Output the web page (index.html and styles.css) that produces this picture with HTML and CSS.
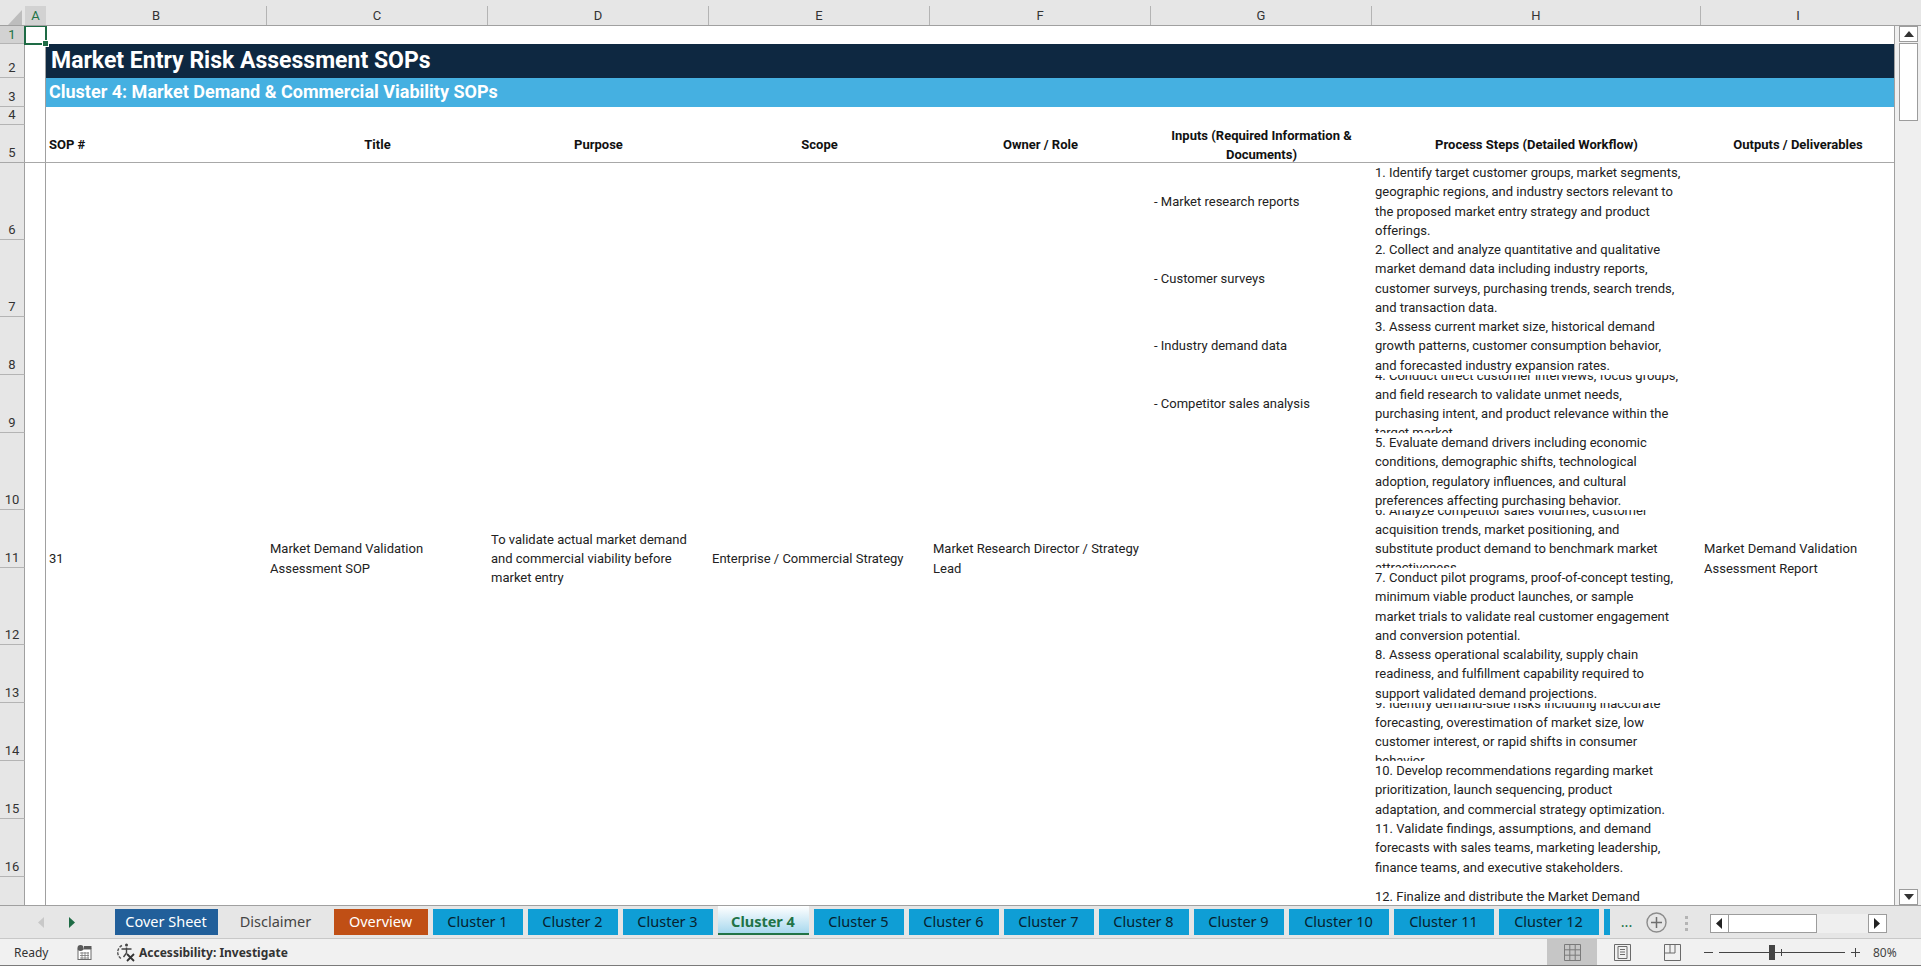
FILE: index.html
```html
<!DOCTYPE html>
<html>
<head>
  <title>Market Entry Risk Assessment SOPs</title>
  <link rel="stylesheet" href="styles.css">
</head>
<body>
<div class="app">

  <div class="col-bar">
    <div class="corner"><svg width="14" height="15" viewBox="0 0 14 15"><path d="M14 0V15H0Z" fill="#bdbdbd"/></svg></div>
    <div class="col-head col-sel">A</div>
    <div class="col-head">B</div>
    <div class="col-head">C</div>
    <div class="col-head">D</div>
    <div class="col-head">E</div>
    <div class="col-head">F</div>
    <div class="col-head">G</div>
    <div class="col-head">H</div>
    <div class="col-head last">I</div>
    <div class="col-rest"></div>
  </div>

  <div class="middle">
    <div class="sheet">
      <div class="col-a-line"></div>
      <div class="head-line"></div>

      <div class="row-head sel r1">1</div>
      <div class="row-head r2">2</div>
      <div class="row-head r3">3</div>
      <div class="row-head r4">4</div>
      <div class="row-head r5">5</div>
      <div class="row-head r6">6</div>
      <div class="row-head r7">7</div>
      <div class="row-head r8">8</div>
      <div class="row-head r9">9</div>
      <div class="row-head r10">10</div>
      <div class="row-head r11">11</div>
      <div class="row-head r12">12</div>
      <div class="row-head r13">13</div>
      <div class="row-head r14">14</div>
      <div class="row-head r15">15</div>
      <div class="row-head r16">16</div>
      <div class="row-head r17">17</div>

      <div class="active-cell r1"><span class="fill-handle"></span></div>

      <div class="title r2">Market Entry Risk Assessment SOPs</div>
      <div class="subtitle r3">Cluster 4: Market Demand &amp; Commercial Viability SOPs</div>

      <div class="th left r5 cb">SOP #</div>
      <div class="th r5 cc">Title</div>
      <div class="th r5 cd">Purpose</div>
      <div class="th r5 ce">Scope</div>
      <div class="th r5 cf">Owner / Role</div>
      <div class="th r5 cg">Inputs (Required Information &amp;<br>Documents)</div>
      <div class="th r5 ch">Process Steps (Detailed Workflow)</div>
      <div class="th r5 ci">Outputs / Deliverables</div>

      <div class="td merged cb">31</div>
      <div class="td merged cc">Market Demand Validation<br>Assessment SOP</div>
      <div class="td merged cd">To validate actual market demand<br>and commercial viability before<br>market entry</div>
      <div class="td merged ce">Enterprise / Commercial Strategy</div>
      <div class="td merged cf">Market Research Director / Strategy<br>Lead</div>
      <div class="td merged ci">Market Demand Validation<br>Assessment Report</div>

      <div class="td r6 cg">- Market research reports</div>
      <div class="td r7 cg">- Customer surveys</div>
      <div class="td r8 cg">- Industry demand data</div>
      <div class="td r9 cg">- Competitor sales analysis</div>

      <div class="td r6 ch"><p>1. Identify target customer groups, market segments,<br>geographic regions, and industry sectors relevant to<br>the proposed market entry strategy and product<br>offerings.</p></div>
      <div class="td r7 ch"><p>2. Collect and analyze quantitative and qualitative<br>market demand data including industry reports,<br>customer surveys, purchasing trends, search trends,<br>and transaction data.</p></div>
      <div class="td r8 ch"><p>3. Assess current market size, historical demand<br>growth patterns, customer consumption behavior,<br>and forecasted industry expansion rates.</p></div>
      <div class="td r9 ch"><p>4. Conduct direct customer interviews, focus groups,<br>and field research to validate unmet needs,<br>purchasing intent, and product relevance within the<br>target market.</p></div>
      <div class="td r10 ch"><p>5. Evaluate demand drivers including economic<br>conditions, demographic shifts, technological<br>adoption, regulatory influences, and cultural<br>preferences affecting purchasing behavior.</p></div>
      <div class="td r11 ch"><p>6. Analyze competitor sales volumes, customer<br>acquisition trends, market positioning, and<br>substitute product demand to benchmark market<br>attractiveness.</p></div>
      <div class="td r12 ch"><p>7. Conduct pilot programs, proof-of-concept testing,<br>minimum viable product launches, or sample<br>market trials to validate real customer engagement<br>and conversion potential.</p></div>
      <div class="td r13 ch"><p>8. Assess operational scalability, supply chain<br>readiness, and fulfillment capability required to<br>support validated demand projections.</p></div>
      <div class="td r14 ch"><p>9. Identify demand-side risks including inaccurate<br>forecasting, overestimation of market size, low<br>customer interest, or rapid shifts in consumer<br>behavior.</p></div>
      <div class="td r15 ch"><p>10. Develop recommendations regarding market<br>prioritization, launch sequencing, product<br>adaptation, and commercial strategy optimization.</p></div>
      <div class="td r16 ch"><p>11. Validate findings, assumptions, and demand<br>forecasts with sales teams, marketing leadership,<br>finance teams, and executive stakeholders.</p></div>
      <div class="td r17 ch"><p>12. Finalize and distribute the Market Demand<br>Validation Assessment Report with market sizing<br>conclusions and demand projections.</p></div>
    </div>

    <div class="vscroll">
      <div class="vbtn"><svg width="10" height="6" viewBox="0 0 10 6"><path d="M5 0L10 6H0Z" fill="#333"/></svg></div>
      <div class="vthumb"></div>
      <div class="vtrack"></div>
      <div class="vbtn"><svg width="10" height="6" viewBox="0 0 10 6"><path d="M0 0H10L5 6Z" fill="#333"/></svg></div>
    </div>
  </div>

  <div class="tabbar">
    <div class="tab-nav">
      <svg width="6" height="11" viewBox="0 0 6 11"><path d="M6 0V11L0 5.5Z" fill="#c8c8c8"/></svg>
      <svg width="6" height="11" viewBox="0 0 6 11"><path d="M0 0V11L6 5.5Z" fill="#1e6b45"/></svg>
    </div>
    <div class="tab navy">Cover Sheet</div>
    <div class="tab plain">Disclaimer</div>
    <div class="tab orange">Overview</div>
    <div class="tab blue">Cluster 1</div>
    <div class="tab blue">Cluster 2</div>
    <div class="tab blue">Cluster 3</div>
    <div class="tab active">Cluster 4</div>
    <div class="tab blue">Cluster 5</div>
    <div class="tab blue">Cluster 6</div>
    <div class="tab blue">Cluster 7</div>
    <div class="tab blue">Cluster 8</div>
    <div class="tab blue">Cluster 9</div>
    <div class="tab blue wide">Cluster 10</div>
    <div class="tab blue wide">Cluster 11</div>
    <div class="tab blue wide">Cluster 12</div>
    <div class="tab blue stub"></div>
    <div class="more">...</div>
    <svg class="add" width="21" height="21" viewBox="0 0 21 21"><circle cx="10.5" cy="10.5" r="9.5" fill="none" stroke="#8c8c8c" stroke-width="1.4"/><path d="M10.5 5V16M5 10.5H16" stroke="#6e6e6e" stroke-width="1.5"/></svg>
    <div class="grip"><i></i><i></i><i></i></div>
    <div class="hscroll">
      <div class="hbtn"><svg width="6" height="11" viewBox="0 0 6 11"><path d="M6 0V11L0 5.5Z" fill="#222"/></svg></div>
      <div class="hthumb"></div>
      <div class="htrack"></div>
      <div class="hbtn"><svg width="6" height="11" viewBox="0 0 6 11"><path d="M0 0V11L6 5.5Z" fill="#222"/></svg></div>
    </div>
  </div>

  <div class="status">
    <span class="ready">Ready</span>
    <svg class="macro" width="15" height="15" viewBox="0 0 15 15"><rect x="1" y="4" width="13" height="10.5" fill="#fff" stroke="#6a6a6a"/><rect x="0.5" y="0" width="6" height="6" rx="3" fill="#5a5a5a"/><rect x="7" y="1" width="7.5" height="3" fill="#5a5a5a"/><path d="M3 8H12M3 10.5H12M3 13H12M5 7V14M8 7V14M11 7V14" stroke="#777" stroke-width="0.8"/></svg>
    <svg class="access" width="20" height="20" viewBox="0 0 20 20"><path d="M6 3.5A7.5 7.5 0 0 0 5 16.5" fill="none" stroke="#555" stroke-width="1.4" stroke-dasharray="3 1.2"/><circle cx="10.5" cy="3" r="1.5" fill="#444"/><path d="M5.5 7H15.5M10.5 5.5V11M10.5 11L7.5 15" fill="none" stroke="#444" stroke-width="1.4"/><path d="M11 12L18 19M18 12L11 19" stroke="#333" stroke-width="1.8"/></svg>
    <span class="access-text">Accessibility: Investigate</span>
    <div class="spring"></div>
    <div class="view on"><svg width="17" height="17" viewBox="0 0 17 17"><path d="M.5.5H16.5V16.5H.5ZM.5 5.8H16.5M.5 11.2H16.5M5.8.5V16.5M11.2.5V16.5" fill="none" stroke="#7a7a7a"/></svg></div>
    <div class="view"><svg width="17" height="17" viewBox="0 0 17 17"><path d="M.5.5H16.5V16.5H.5Z" fill="none" stroke="#6a6a6a"/><path d="M4 2.5H13V14.5H4ZM6 5.5H11M6 8H11M6 10.5H11" fill="none" stroke="#6a6a6a"/></svg></div>
    <div class="view"><svg width="17" height="17" viewBox="0 0 17 17"><path d="M.5.5H16.5V16.5H.5ZM6 .5V9H11V.5M.5 9H6" fill="none" stroke="#6a6a6a"/></svg></div>
    <div class="zoom">
      <span class="minus"></span>
      <div class="slider"><span class="tick"></span><span class="knob"></span></div>
      <svg class="plus" width="9" height="9" viewBox="0 0 9 9"><path d="M4.5 0V9M0 4.5H9" stroke="#444"/></svg>
      <span class="pct">80%</span>
    </div>
  </div>

</div>
</body>
</html>
```
FILE: styles.css
```css
html, body {
  margin: 0;
  height: 100%;
  overflow: hidden;
}
body {
  background-color: #E6E6E6;
  font-family: "Roboto", "Liberation Sans", sans-serif;
  color: #1a1a1a;
}
.app {
  height: 966px;
  display: flex;
  flex-direction: column;
}

/* column letters */
.col-bar {
  --line: #b4b4b4;
  display: grid;
  grid-template-columns: 25px 21px 221px 221px 221px 221px 221px 221px 329px 194px 27px;
  height: 25px;
  padding-top: 6px;
  box-sizing: border-box;
  border-bottom: 1px solid #a0a0a0;
  height: 26px;
  font-size: 13px;
  color: #333;
}
.corner {
  display: flex;
  justify-content: flex-end;
  align-items: flex-end;
  padding-right: 3px;
  padding-bottom: 0;
}
.col-head {
  text-align: center;
  line-height: 19px;
  border-right: 1px solid var(--line);
}
.col-head.last { border-right: 0; }
.col-sel {
  background-color: #D2D2D2;
  color: #217346;
  border-right: 0;
}

/* the worksheet */
.middle {
  height: 879px;
  display: flex;
}
.sheet {
  width: 1894px;
  height: 879px;
  overflow: hidden;
  display: grid;
  grid-template-columns: 25px 21px 221px 221px 221px 221px 221px 221px 329px 194px;
  grid-template-rows: 18px 34px 29px 18px 38px 77px 77px 58px 58px 77px 58px 77px 58px 58px 58px 58px 77px;
  background-color: #fff;
  font-size: 13px;
  position: relative;
}
.r1 { grid-row: 1; }
.r2 { grid-row: 2; }
.r3 { grid-row: 3; }
.r4 { grid-row: 4; }
.r5 { grid-row: 5; }
.r6 { grid-row: 6; }
.r7 { grid-row: 7; }
.r8 { grid-row: 8; }
.r9 { grid-row: 9; }
.r10 { grid-row: 10; }
.r11 { grid-row: 11; }
.r12 { grid-row: 12; }
.r13 { grid-row: 13; }
.r14 { grid-row: 14; }
.r15 { grid-row: 15; }
.r16 { grid-row: 16; }
.r17 { grid-row: 17; }
.cb { grid-column: 3; }
.cc { grid-column: 4; }
.cd { grid-column: 5; }
.ce { grid-column: 6; }
.cf { grid-column: 7; }
.cg { grid-column: 8; }
.ch { grid-column: 9; }
.ci { grid-column: 10; }

.row-head {
  grid-column: 1;
  background-color: #E6E6E6;
  border-right: 1px solid #a0a0a0;
  border-bottom: 1px solid #b4b4b4;
  box-sizing: border-box;
  display: flex;
  align-items: flex-end;
  justify-content: center;
  line-height: 16px;
  padding-bottom: 1px;
  color: #333;
}
.row-head.sel {
  background-color: #D2D2D2;
  color: #217346;
  align-items: center;
  padding-bottom: 0;
}
.col-a-line {
  grid-column: 2;
  grid-row: 1 / -1;
  border-right: 1px solid #a0a0a0;
}
.head-line {
  grid-column: 1 / -1;
  grid-row: 5;
  border-bottom: 1px solid #a8a8a8;
  z-index: 1;
}
.active-cell {
  grid-column: 2;
  position: relative;
  outline: 2px solid #1e6b45;
  outline-offset: -1px;
  z-index: 2;
}
.fill-handle {
  position: absolute;
  right: -3px;
  bottom: -3px;
  width: 5px;
  height: 5px;
  background-color: #1e6b45;
  border: 1px solid #fff;
}

.title {
  grid-column: 3 / -1;
  background-color: #0E2841;
  color: #fff;
  font-size: 23px;
  font-weight: 700;
  line-height: 34px;
  padding-left: 5px;
}
.subtitle {
  grid-column: 3 / -1;
  background-color: #45B0E1;
  color: #fff;
  font-size: 18px;
  font-weight: 700;
  line-height: 28px;
  padding-left: 3px;
}
.th {
  font-weight: 700;
  text-align: center;
  line-height: 19px;
  display: flex;
  align-items: center;
  justify-content: center;
  padding-top: 1px;
  color: #111;
}
.th.left {
  justify-content: flex-start;
  padding-left: 3px;
}
.td {
  display: flex;
  align-items: center;
  line-height: 19.2px;
  padding-left: 3px;
  overflow: hidden;
  white-space: nowrap;
  color: #222;
}
.td p {
  margin: 0;
}
.merged {
  grid-row: 6 / 18;
}

/* right scrollbar */
.vscroll {
  width: 27px;
  border-left: 1px solid #a0a0a0;
  box-sizing: border-box;
  display: flex;
  flex-direction: column;
  align-items: center;
  background-color: #EFEFEF;
  padding-left: 1px;
}
.vbtn {
  width: 19px;
  height: 16px;
  background-color: #fff;
  border: 1px solid #9c9c9c;
  box-sizing: border-box;
  display: flex;
  align-items: center;
  justify-content: center;
}
.vthumb {
  width: 19px;
  height: 78px;
  background-color: #fff;
  border: 1px solid #9c9c9c;
  box-sizing: border-box;
  margin-top: 1px;
}
.vtrack { flex: 1; }

/* sheet tabs */
.tabbar {
  height: 33px;
  border-top: 1px solid #a0a0a0;
  box-sizing: border-box;
  display: flex;
  align-items: flex-start;
  padding-top: 3px;
  background-color: #E6E6E6;
  font-family: "Noto Sans", "Open Sans", sans-serif;
  font-size: 14.5px;
  position: relative;
}
.tab-nav {
  width: 112px;
  display: flex;
  justify-content: center;
  gap: 25px;
  padding: 8px 0 0 0;
  box-sizing: border-box;
}
.tab {
  height: 26px;
  line-height: 25px;
  text-align: center;
  box-sizing: border-box;
  margin-left: 2.5px;
  margin-right: 2.5px;
  width: 90px;
  white-space: nowrap;
  position: relative;
}
.tab.navy { width: 103px; background-color: #215F9A; color: #fff; }
.tab.plain { width: 106px; color: #444; }
.tab.orange { width: 94px; background-color: #C04F15; color: #fff; }
.tab.blue { background-color: #0F9ED5; color: #07222e; }
.tab.wide { width: 100px; }
.tab.stub { width: 6px; margin-right: 0; }
.tab.active {
  width: 91px;
  height: 29px;
  margin-top: -3px;
  padding-top: 3px;
  background: linear-gradient(#fff, #a8d8ee);
  color: #217346;
  font-weight: 700;
  border-bottom: 2px solid #217346;
}
.more {
  width: 34px;
  text-align: center;
  color: #217346;
  line-height: 24px;
  margin-left: 0;
}
.add {
  margin: 3px 0 0 2px;
}
.grip {
  width: 6px;
  margin: 7px 0 0 18px;
  display: flex;
  flex-direction: column;
  gap: 3px;
}
.grip i {
  display: block;
  width: 3px;
  height: 3px;
  background-color: #b4b4b4;
}
.hscroll {
  width: 177px;
  height: 19px;
  margin: 5px 0 0 19px;
  display: flex;
}
.hbtn {
  width: 19px;
  background-color: #fff;
  border: 1px solid #9c9c9c;
  box-sizing: border-box;
  display: flex;
  align-items: center;
  justify-content: center;
}
.hthumb {
  width: 88px;
  background-color: #fff;
  border: 1px solid #9c9c9c;
  border-left: 0;
  box-sizing: border-box;
}
.htrack {
  flex: 1;
  background-color: #EFEFEF;
}

/* status bar */
.status {
  height: 28px;
  background-color: #F1F1F1;
  border-top: 1px solid #c8c8c8;
  border-bottom: 1px solid #7a7a7a;
  box-sizing: border-box;
  display: flex;
  align-items: center;
  font-family: "Noto Sans", "Open Sans", sans-serif;
  font-size: 12px;
  color: #333;
}
.ready { margin-left: 14px; width: 49px; }
.macro { margin-left: 14px; }
.access { margin-left: 24px; }
.access-text {
  margin-left: 3px;
  font-weight: 700;
  font-size: 12px;
}
.spring { flex: 1; }
.view {
  width: 50px;
  height: 100%;
  display: flex;
  align-items: center;
  justify-content: center;
}
.view.on { background-color: #C6C6C6; }
.zoom {
  display: flex;
  align-items: center;
  width: 224px;
  padding-left: 7px;
  box-sizing: border-box;
}
.minus {
  width: 9px;
  height: 1px;
  background-color: #444;
}
.slider {
  width: 126px;
  height: 1px;
  background-color: #444;
  margin-left: 6px;
  position: relative;
}
.knob {
  position: absolute;
  left: 50px;
  top: -7px;
  width: 6px;
  height: 15px;
  background-color: #444;
}
.tick {
  position: absolute;
  left: 62px;
  top: -3px;
  width: 1px;
  height: 7px;
  background-color: #444;
}
.plus { margin-left: 6px; }
.pct { margin-left: 13px; color: #444; }
```
